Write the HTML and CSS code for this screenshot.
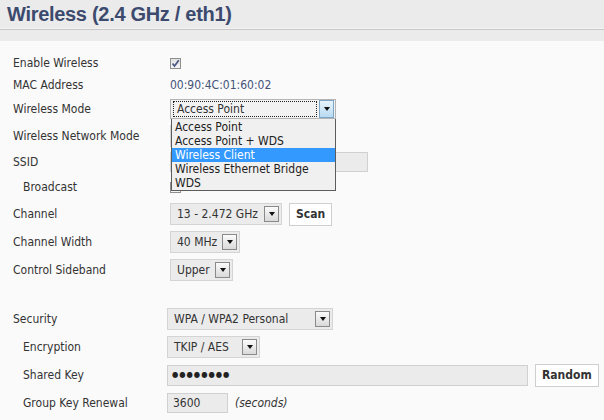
FILE: index.html
```html
<!DOCTYPE html>
<html lang="en">
  <head>
    <meta charset="UTF-8" />
    <meta name="viewport" content="width=device-width, initial-scale=1.0" />
    <title>Wireless settings</title>
    <link rel="stylesheet" href="styles.css">
  </head>
  <body>
    <div class="title-bar">
      <h1>Wireless (2.4 GHz / eth1)</h1>
    </div>
    <div class="section">
      <div class="row r22">
        <div class="label">Enable Wireless</div>
        <div class="value">
          <span class="check"><svg width="9" height="9" viewBox="0 0 9 9"><path d="M1.5 4.5 L3.5 7 L7.8 1.2" fill="none" stroke="#4b5a86" stroke-width="1.7" /></svg></span>
        </div>
      </div>
      <div class="row r22">
        <div class="label">MAC Address</div>
        <div class="value mac">00:90:4C:01:60:02</div>
      </div>
      <div class="row r26">
        <div class="label">Wireless Mode</div>
        <div class="value">
          <div class="select focused w-mode">
            <span class="text">Access Point</span>
            <span class="arrow"></span>
            <ul class="dropdown">
              <li>Access Point</li>
              <li>Access Point + WDS</li>
              <li class="selected">Wireless Client</li>
              <li>Wireless Ethernet Bridge</li>
              <li>WDS</li>
            </ul>
          </div>
        </div>
      </div>
      <div class="row r28">
        <div class="label">Wireless Network Mode</div>
        <div class="value">
          <!-- covered by the open list above -->
          <div class="select w-auto"><span class="text"></span><span class="arrow"></span></div>
        </div>
      </div>
      <div class="row r24">
        <div class="label">SSID</div>
        <div class="value"><div class="input w-ssid"></div></div>
      </div>
      <div class="row r26">
        <div class="label sub">Broadcast</div>
        <div class="value"><span class="check"></span></div>
      </div>
      <div class="row r28">
        <div class="label">Channel</div>
        <div class="value">
          <div class="select w-channel"><span class="text">13 - 2.472 GHz</span><span class="arrow"></span></div>
          <button class="btn">Scan</button>
        </div>
      </div>
      <div class="row r28">
        <div class="label">Channel Width</div>
        <div class="value">
          <div class="select w-width"><span class="text">40 MHz</span><span class="arrow"></span></div>
        </div>
      </div>
      <div class="row r28">
        <div class="label">Control Sideband</div>
        <div class="value">
          <div class="select w-side"><span class="text">Upper</span><span class="arrow"></span></div>
        </div>
      </div>
    </div>

    <div class="section security">
      <div class="row r28">
        <div class="label">Security</div>
        <div class="value">
          <div class="select w-security"><span class="text">WPA / WPA2 Personal</span><span class="arrow"></span></div>
        </div>
      </div>
      <div class="row r28">
        <div class="label sub">Encryption</div>
        <div class="value">
          <div class="select w-enc"><span class="text">TKIP / AES</span><span class="arrow"></span></div>
        </div>
      </div>
      <div class="row r28">
        <div class="label sub">Shared Key</div>
        <div class="value">
          <div class="input w-key dots">&#9679;&#9679;&#9679;&#9679;&#9679;&#9679;&#9679;&#9679;</div>
          <button class="btn">Random</button>
        </div>
      </div>
      <div class="row r28">
        <div class="label sub">Group Key Renewal</div>
        <div class="value">
          <div class="input w-renew">3600</div>
          <span class="hint">(seconds)</span>
        </div>
      </div>
    </div>
  </body>
</html>
```

FILE: styles.css
```css
* {
  padding: 0;
  margin: 0;
  box-sizing: border-box;
}
body {
  background-color: #fafafa;
  font-family: "DejaVu Sans Condensed", "DejaVu Sans", sans-serif;
  font-size: 12px;
  color: #333;
  width: 604px;
  height: 420px;
  overflow: hidden;
}
.title-bar {
  background-color: #ebebeb;
  padding-bottom: 11px;
}
h1 {
  height: 30px;
  line-height: 28px;
  padding-left: 7px;
  font-family: "Liberation Sans", sans-serif;
  font-size: 20px;
  letter-spacing: -0.3px;
  font-weight: bold;
  color: #3c4a6e;
  border-bottom: 1px solid #c8c8c8;
  box-shadow: inset 0 -3px 0 -2px #f2f2f2;
}
.section {
  padding-top: 11px;
}
.section.security {
  padding-top: 21px;
}
.row {
  display: flex;
  align-items: center;
  padding-left: 13px;
}
.r22 { height: 22px; }
.r24 { height: 24px; }
.r26 { height: 26px; }
.r28 { height: 28px; }
.label {
  width: 157px;
  flex-shrink: 0;
}
.security .label {
  width: 154px;
}
.label.sub {
  padding-left: 10px;
}
.value {
  display: flex;
  align-items: center;
  gap: 7px;
}
.mac {
  color: #44527a;
}

/* checkbox */
.check {
  width: 11px;
  height: 11px;
  border: 1px solid #8e8f8f;
  background: linear-gradient(#e2e2e2, #f6f6f6);
  display: flex;
  align-items: center;
  justify-content: center;
}

/* select boxes */
.select {
  position: relative;
  height: 22px;
  display: flex;
  align-items: center;
  justify-content: space-between;
  padding: 0 2px 0 6px;
  background-color: #ebebeb;
  border: 1px solid #d4d4d4;
}
.select .arrow {
  width: 15px;
  height: 16px;
  border: 1px solid #8a8a8a;
  background: linear-gradient(#fbfbfb, #d9d9d9);
  display: flex;
  align-items: center;
  justify-content: center;
}
.select .arrow::after {
  content: "";
  border-left: 3px solid transparent;
  border-right: 3px solid transparent;
  border-top: 4px solid #111;
}
.select.focused {
  height: 20px;
  padding: 0 1px 0 2px;
  border-color: #b4b4b4;
  background-color: #f2f2f2;
}
.select.focused .text {
  flex: 1;
  height: 16px;
  line-height: 14px;
  padding-left: 3px;
  margin-right: 2px;
  border: 1px dotted #222;
}
.select.focused .arrow {
  height: 18px;
  border-color: #7ea6c6;
  background: linear-gradient(#e8f4fc, #b8daf1);
}
.w-mode { width: 166px; }
.w-auto { width: 70px; }
.w-channel { width: 112px; }
.w-width { width: 70px; }
.w-side { width: 63px; }
.w-security { width: 166px; }
.w-enc { width: 93px; }

.dropdown {
  position: absolute;
  top: 19px;
  left: 0;
  width: 165px;
  list-style: none;
  background-color: #f0f0f0;
  border: 1px solid #5c5c5c;
  border-top: none;
  padding-top: 1px;
  z-index: 2;
}
.dropdown li {
  height: 14px;
  line-height: 14px;
  padding-left: 3px;
  color: #222;
  white-space: nowrap;
}
.dropdown li.selected {
  background-color: #3399ff;
  color: #fff;
}

/* text inputs */
.input {
  height: 20px;
  line-height: 18px;
  padding-left: 5px;
  background-color: #ebebeb;
  border: 1px solid #d0d0d0;
  color: #333;
}
.w-ssid { width: 198px; }
.w-key { width: 361px; height: 21px; }
.w-renew { width: 61px; }
.dots {
  padding-left: 4px;
  font-size: 8px;
  letter-spacing: 1px;
  color: #222;
}
.hint {
  font-style: italic;
  color: #333;
}

/* buttons */
.btn {
  height: 23px;
  padding: 0 6px;
  font-family: inherit;
  font-size: 12px;
  font-weight: bold;
  color: #333;
  background-color: #fff;
  border: 1px solid #cfcfcf;
  cursor: pointer;
}
```
